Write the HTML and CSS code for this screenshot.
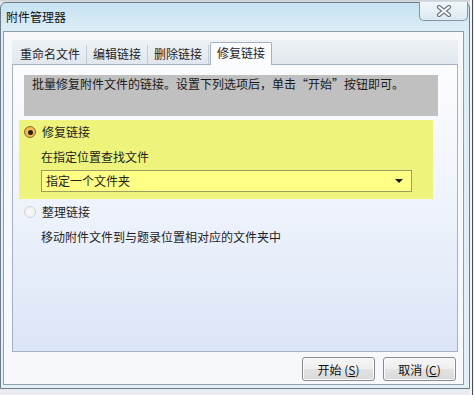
FILE: index.html
```html
<!DOCTYPE html>
<html lang="zh-CN">
<head>
    <meta charset="UTF-8">
    <title>附件管理器</title>
    <link rel="stylesheet" href="styles.css">
</head>
<body>
    <div class="screen">
        <div class="window">
            <div class="titlebar">
                <span class="title">附件管理器</span>
                <button class="close" aria-label="关闭">
                    <svg width="18" height="12" viewBox="0 0 18 12">
                        <path d="M4 2 L14 10 M14 2 L4 10" stroke="#6d7580" stroke-width="4.2" stroke-linecap="round"/>
                        <path d="M4 2 L14 10 M14 2 L4 10" stroke="#fdfdfd" stroke-width="2" stroke-linecap="round"/>
                    </svg>
                </button>
            </div>
            <div class="client">
                <div class="tabs">
                    <div class="tab">重命名文件</div>
                    <div class="tab">编辑链接</div>
                    <div class="tab">删除链接</div>
                    <div class="tab active">修复链接</div>
                </div>
                <div class="panel">
                    <div class="desc">批量修复附件文件的链接。设置下列选项后，单击“开始”按钮即可。</div>
                    <div class="option highlight">
                        <div class="row">
                            <span class="radio checked"></span>
                            <span>修复链接</span>
                        </div>
                        <div class="row sub">在指定位置查找文件</div>
                        <div class="select">
                            <span>指定一个文件夹</span>
                            <span class="arrow"></span>
                        </div>
                    </div>
                    <div class="option plain">
                        <div class="row">
                            <span class="radio"></span>
                            <span>整理链接</span>
                        </div>
                        <div class="row sub">移动附件文件到与题录位置相对应的文件夹中</div>
                    </div>
                </div>
                <div class="buttons">
                    <button class="btn">开始 (<u>S</u>)</button>
                    <button class="btn">取消 (<u>C</u>)</button>
                </div>
            </div>
        </div>
        <div class="edge"></div>
    </div>
</body>
</html>
```

FILE: styles.css
```css
* {
    box-sizing: border-box;
}

body {
    margin: 0;
    width: 474px;
    height: 395px;
    overflow: hidden;
    background: linear-gradient(to bottom, #c9ced4 0, #e4e8ec 3px, #e9edf1 100%);
    font-family: "Noto Sans CJK SC", "Noto Sans", sans-serif;
    font-size: 12px;
    color: #1e1e1e;
}

.screen {
    display: flex;
    height: 395px;
}

.window {
    width: 470px;
    height: 387px;
    margin-top: 2px;
    border: 1px solid #6e7c8c;
    border-radius: 6px 6px 0 0;
    background: linear-gradient(to bottom, #c7e3f1 0, #dcedf6 28px, #e4f0f6 100%);
    padding: 0 5px 3px 2px;
    display: flex;
    flex-direction: column;
}

.edge {
    flex: 1;
    background: linear-gradient(to right, #f2f4f6 0, #f2f4f6 2px, #4a4f55 2px, #4a4f55 3px, #eef0f2 3px);
}

.titlebar {
    height: 28px;
    display: flex;
    align-items: flex-start;
    justify-content: space-between;
}

.title {
    margin-top: 6px;
    margin-left: 3px;
    line-height: 16px;
    color: #111;
}

.close {
    width: 49px;
    height: 19px;
    margin-right: -4px;
    margin-top: -1px;
    padding: 0;
    border: 1px solid #8593a2;
    border-top: none;
    border-radius: 0 0 5px 5px;
    background: linear-gradient(to bottom, #f1f7fa, #dbe9f1);
    display: flex;
    align-items: center;
    justify-content: center;
}

.client {
    flex: 1;
    border: 1px solid #8c9db0;
    background: #f6f8fc;
    padding: 8px 5px 0 8px;
}

.tabs {
    display: flex;
    height: 24px;
    padding-left: 2px;
    background: linear-gradient(to bottom, #eef2f6, #e1e7ee);
    position: relative;
    z-index: 1;
}

.tab {
    height: 19px;
    margin-top: 5px;
    padding: 0 6px;
    line-height: 18px;
    border-right: 1px solid #c2ccd6;
    color: #1e1e1e;
}

.tab.active {
    height: 23px;
    margin-top: 2px;
    margin-left: 1px;
    line-height: 19px;
    background: #fbfcfe;
    border: 1px solid #a3b1c1;
    border-bottom: none;
    border-radius: 2px 2px 0 0;
}

.panel {
    height: 288px;
    border: 1px solid #a3b1c1;
    background: linear-gradient(to bottom, #fbfcfe 0, #eef3fb 50%, #dbe5f7 100%);
    padding: 10px 0 0 6px;
}

.desc {
    width: 414px;
    height: 41px;
    margin-left: 5px;
    padding: 1px 0 0 8px;
    line-height: 16px;
    background: #c0c0c0;
    color: #1a1a1a;
}

.option {
    width: 414px;
}

.highlight {
    margin-top: 4px;
    height: 79px;
    padding: 4px 0 0 5px;
    background: #eef37c;
}

.plain {
    padding: 5px 0 0 5px;
}

.row {
    display: flex;
    align-items: center;
    gap: 6px;
    height: 16px;
    line-height: 16px;
}

.row.sub {
    margin-top: 9px;
    padding-left: 17px;
}

.radio {
    width: 12px;
    height: 12px;
    border-radius: 50%;
    border: 1px solid #d0d3d6;
    background: radial-gradient(circle, #fafafa 0, #eeeeee 100%);
    display: flex;
    align-items: center;
    justify-content: center;
}

.radio.checked {
    border-color: #8b6a2a;
    background: radial-gradient(circle, #f9d27a 0, #eba33a 100%);
}

.radio.checked::after {
    content: "";
    width: 5px;
    height: 5px;
    border-radius: 50%;
    background: #2a1c08;
}

.select {
    width: 371px;
    height: 22px;
    margin-top: 5px;
    margin-left: 17px;
    border: 1px solid #9b9f62;
    background: #ffff86;
    display: flex;
    align-items: center;
    justify-content: space-between;
    padding: 0 8px 0 4px;
    line-height: 16px;
}

.arrow {
    width: 0;
    height: 0;
    border-left: 4px solid transparent;
    border-right: 4px solid transparent;
    border-top: 4px solid #1a1a1a;
}

.buttons {
    display: flex;
    justify-content: flex-end;
    gap: 8px;
    margin-top: 5px;
    padding-right: 2px;
}

.btn {
    width: 73px;
    height: 24px;
    border: 1px solid #8a8a8a;
    border-radius: 3px;
    background: linear-gradient(to bottom, #f6f6f6 0, #eeeeee 50%, #e3e3e3 51%, #d9d9d9 100%);
    font-family: "Noto Sans CJK SC", "Noto Sans", sans-serif;
    font-size: 12px;
    color: #111;
    padding: 0;
    box-shadow: inset 0 0 0 1px #fbfbfb;
}
```
